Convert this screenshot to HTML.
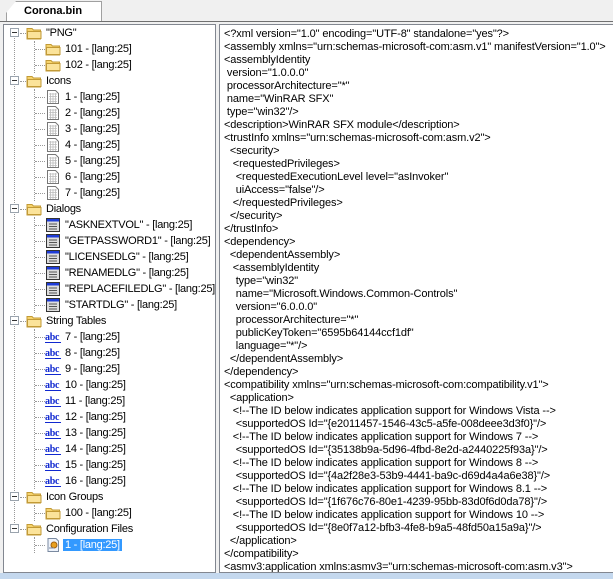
<!DOCTYPE html>
<html><head><meta charset="utf-8"><style>
*{margin:0;padding:0;box-sizing:border-box}
body{width:613px;height:579px;background:#f0f0f0;position:relative;overflow:hidden;font-family:"Liberation Sans",Tahoma,sans-serif;font-size:11px;color:#000}
.tab{position:absolute;left:6px;top:1px;width:96px;height:21px;background:#fff;border:1px solid #a0a0a0;border-bottom:none;clip-path:polygon(10px 0,100% 0,100% 100%,0 100%,0 12px)}
.tabt{position:absolute;left:24px;top:5px;font-weight:bold;font-size:11px}
.tl{position:absolute;left:0;top:21px;width:613px;height:1px;background:#707070}
.tree{position:absolute;left:3px;top:24px;width:213px;height:549px;background:#fff;border:1px solid #828790;letter-spacing:-0.25px}
.txt{position:absolute;left:219px;top:24px;width:394px;height:549px;background:#fff;border:1px solid #828790;border-right:none;overflow:hidden}
.txt pre{position:absolute;left:4px;top:3px;font-family:"Liberation Sans",Tahoma,sans-serif;font-size:11px;line-height:13px;white-space:pre;letter-spacing:-0.12px}
.bar{position:absolute;left:0;top:573px;width:613px;height:6px;background:#c4d8ee}
.r{position:absolute;height:16px;white-space:nowrap;line-height:16px}
.vl{position:absolute;width:1px;border-left:1px dotted #999}
.hl{position:absolute;height:1px;border-top:1px dotted #999}
.ex{position:absolute;width:9px;height:9px;border:1px solid #9aa3ad;background:#fff}
.ex:after{content:"";position:absolute;left:1px;top:3px;width:5px;height:1px;background:#333}
svg{position:absolute}
.sel{background:#3399ff;color:#fff;padding:0 2px;margin-left:-2px}
</style></head><body>
<div class="tab"></div><div class="tabt">Corona.bin</div>
<div class="tl"></div>
<svg width="0" height="0" style="position:absolute">
<defs>
<symbol id="fo" viewBox="0 0 16 16"><path d="M1 3.5h5l1.5 1.5h7v9h-13.5z" fill="#f6d36c" stroke="#c29a36"/><path d="M1.5 6.5h13.5v7h-13.5z" fill="#fbe39a" stroke="#c29a36"/></symbol>
<symbol id="ic" viewBox="0 0 16 16"><path d="M2.5 1.5h8l3 3v10h-11z" fill="#fff" stroke="#777"/><path d="M4 5h8M4 7.5h8M4 10h8M4 12.5h8M5.5 4v10M8 4v10M10.5 4v10" stroke="#bbb" stroke-width=".8"/></symbol>
<symbol id="dl" viewBox="0 0 16 16"><rect x="1.5" y="1.5" width="13" height="13" fill="#ddd" stroke="#333"/><rect x="2" y="2" width="12" height="2.5" fill="#1e3cd8"/><path d="M4 7h8M4 9.5h8M4 12h8" stroke="#555"/></symbol>
<symbol id="ab" viewBox="0 0 16 16"><text x="0" y="11" font-family="Liberation Serif,serif" font-weight="bold" font-size="10" fill="#1028d0">abc</text><path d="M0 13.5h16" stroke="#1028d0"/></symbol>
<symbol id="cf" viewBox="0 0 16 16"><path d="M3 1.5h8l2.5 2.5v10.5h-10.5z" fill="#eef3fb" stroke="#7a8aa0"/><circle cx="9" cy="8" r="3" fill="#e8a020" stroke="#a06010"/><path d="M4 11h5" stroke="#7a8aa0"/></symbol>
</defs></svg>
<div class="tree">
<div class="vl" style="left:10px;top:8px;height:496px"></div>
<div class="vl" style="left:30px;top:16px;height:32px"></div>
<div class="vl" style="left:30px;top:64px;height:112px"></div>
<div class="vl" style="left:30px;top:192px;height:96px"></div>
<div class="vl" style="left:30px;top:304px;height:160px"></div>
<div class="vl" style="left:30px;top:480px;height:16px"></div>
<div class="vl" style="left:30px;top:512px;height:16px"></div>
<div id="rows"></div>
</div>
<div class="txt"><pre>&lt;?xml version="1.0" encoding="UTF-8" standalone="yes"?&gt;
&lt;assembly xmlns="urn:schemas-microsoft-com:asm.v1" manifestVersion="1.0"&gt;
&lt;assemblyIdentity
 version="1.0.0.0"
 processorArchitecture="*"
 name="WinRAR SFX"
 type="win32"/&gt;
&lt;description&gt;WinRAR SFX module&lt;/description&gt;
&lt;trustInfo xmlns="urn:schemas-microsoft-com:asm.v2"&gt;
  &lt;security&gt;
   &lt;requestedPrivileges&gt;
    &lt;requestedExecutionLevel level="asInvoker"
    uiAccess="false"/&gt;
   &lt;/requestedPrivileges&gt;
  &lt;/security&gt;
&lt;/trustInfo&gt;
&lt;dependency&gt;
  &lt;dependentAssembly&gt;
   &lt;assemblyIdentity
    type="win32"
    name="Microsoft.Windows.Common-Controls"
    version="6.0.0.0"
    processorArchitecture="*"
    publicKeyToken="6595b64144ccf1df"
    language="*"/&gt;
  &lt;/dependentAssembly&gt;
&lt;/dependency&gt;
&lt;compatibility xmlns="urn:schemas-microsoft-com:compatibility.v1"&gt;
  &lt;application&gt;
   &lt;!--The ID below indicates application support for Windows Vista --&gt;
    &lt;supportedOS Id="{e2011457-1546-43c5-a5fe-008deee3d3f0}"/&gt;
   &lt;!--The ID below indicates application support for Windows 7 --&gt;
    &lt;supportedOS Id="{35138b9a-5d96-4fbd-8e2d-a2440225f93a}"/&gt;
   &lt;!--The ID below indicates application support for Windows 8 --&gt;
    &lt;supportedOS Id="{4a2f28e3-53b9-4441-ba9c-d69d4a4a6e38}"/&gt;
   &lt;!--The ID below indicates application support for Windows 8.1 --&gt;
    &lt;supportedOS Id="{1f676c76-80e1-4239-95bb-83d0f6d0da78}"/&gt;
   &lt;!--The ID below indicates application support for Windows 10 --&gt;
    &lt;supportedOS Id="{8e0f7a12-bfb3-4fe8-b9a5-48fd50a15a9a}"/&gt;
  &lt;/application&gt;
&lt;/compatibility&gt;
&lt;asmv3:application xmlns:asmv3="urn:schemas-microsoft-com:asm.v3"&gt;</pre></div>
<div class="bar"></div>
<script>
var items=[[0,'fo','"PNG"'],[1,'fo','101 - [lang:25]'],[1,'fo','102 - [lang:25]'],[0,'fo','Icons']];
for(var i=1;i<=7;i++)items.push([1,'ic',i+' - [lang:25]']);
items.push([0,'fo','Dialogs']);
['"ASKNEXTVOL"','"GETPASSWORD1"','"LICENSEDLG"','"RENAMEDLG"','"REPLACEFILEDLG"','"STARTDLG"'].forEach(function(n){items.push([1,'dl',n+' - [lang:25]'])});
items.push([0,'fo','String Tables']);
for(var i=7;i<=16;i++)items.push([1,'ab',i+' - [lang:25]']);
items.push([0,'fo','Icon Groups'],[1,'fo','100 - [lang:25]'],[0,'fo','Configuration Files'],[1,'cf','1 - [lang:25]']);
var h='';
items.forEach(function(it,i){
 var t=i*16;
 if(it[0]==0){
  h+='<div class="ex" style="left:6px;top:'+(t+3)+'px"></div><div class="hl" style="left:16px;top:'+(t+8)+'px;width:6px"></div>';
  h+='<svg width="16" height="16" style="left:22px;top:'+t+'px"><use href="#'+it[1]+'"/></svg>';
  h+='<div class="r" style="left:42px;top:'+t+'px">'+it[2]+'</div>';
 }else{
  h+='<div class="hl" style="left:31px;top:'+(t+8)+'px;width:10px"></div>';
  h+='<svg width="16" height="16" style="left:41px;top:'+t+'px"><use href="#'+it[1]+'"/></svg>';
  h+='<div class="r" style="left:61px;top:'+t+'px"><span'+(i==items.length-1?' class="sel"':'')+'>'+it[2]+'</span></div>';
 }
});
document.getElementById('rows').innerHTML=h;
</script>
</body></html>
